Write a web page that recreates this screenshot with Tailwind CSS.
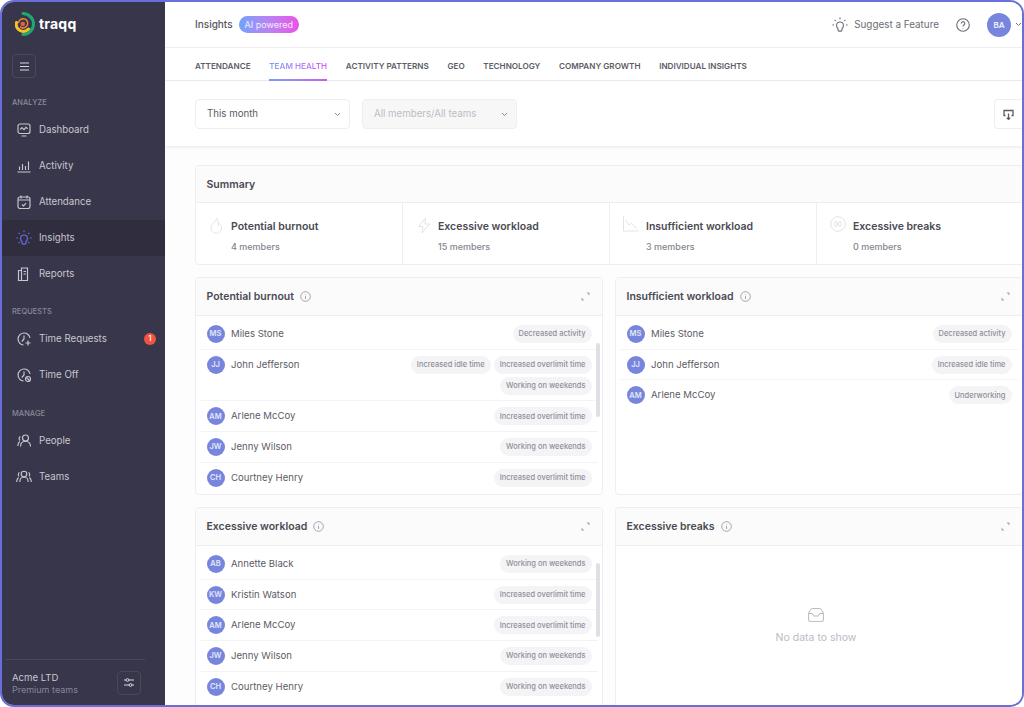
<!DOCTYPE html>
<html lang="en">
<head>
    <meta charset="UTF-8">
    <title>traqq - Insights</title>
    <script src="https://cdn.jsdelivr.net/npm/@tailwindcss/browser@4"></script>
</head>
<body class="bg-white [font-family:Inter,sans-serif]">
<div class="w-[1024px] h-[707px] border-2 border-[#6a6ed8] rounded-[14px] overflow-hidden flex bg-[#fdfdfd]">

    <!-- sidebar -->
    <aside class="w-[163px] shrink-0 h-full bg-[#38364a] flex flex-col text-[#c8c7d1]">
        <div class="flex items-center h-[44px] pl-[13px]">
            <svg width="20" height="24" viewBox="0 0 20 24" fill="none">
                <path d="M8 1.5a10.5 10.5 0 0 1 0 21" stroke="#1fa971" stroke-width="3" stroke-linecap="round"/>
                <path d="M1.5 10.5a7 7 0 0 0 12 6.5" stroke="#f6c12c" stroke-width="3" stroke-linecap="round"/>
                <path d="M3.6 10.5a4.6 4.6 0 1 1 2 4.6" stroke="#f08a2c" stroke-width="1.5" stroke-linecap="round"/>
                <circle cx="7.8" cy="12" r="2.3" fill="#ee5a4a"/>
            </svg>
            <span class="ml-[4px] text-[14px] leading-none font-bold text-white tracking-[0.2px]">traqq</span>
        </div>
        <div class="mt-[8px] ml-[10px] w-[24px] h-[24px] rounded-[4px] border border-[#4a4859] flex items-center justify-center">
            <svg width="11" height="9" viewBox="0 0 11 9" fill="none" stroke="#d8d7df" stroke-width="1.1"><path d="M1 1h9M1 4.5h9M1 8h9"/></svg>
        </div>
        <div class="mt-[20px] ml-[10px] text-[7.5px] leading-[10px] font-medium text-[#8a8899]">ANALYZE</div>
        <nav class="mt-[4px] flex flex-col text-[9.7px]">
            <a class="h-[36px] flex items-center pl-[15px] gap-[8px]">
                <svg class="w-[14px] h-[14px]" viewBox="0 0 14 14" fill="none" stroke="#c8c7d1" stroke-width="1.15"><rect x="1" y="1" width="12" height="9.5" rx="2"/><path d="M3.2 6.5 5 4.6l2 2 2-2.2 1.6 1.4M4.5 13h5"/></svg>
                <span>Dashboard</span>
            </a>
            <a class="h-[36px] flex items-center pl-[15px] gap-[8px]">
                <svg class="w-[14px] h-[14px]" viewBox="0 0 14 14" fill="none" stroke="#c8c7d1" stroke-width="1.15"><path d="M.5 13h13M2.5 11V7.5M5.5 11V5M8.5 11V7M11.5 11V2.5"/></svg>
                <span>Activity</span>
            </a>
            <a class="h-[36px] flex items-center pl-[15px] gap-[8px]">
                <svg class="w-[14px] h-[14px]" viewBox="0 0 14 14" fill="none" stroke="#c8c7d1" stroke-width="1.15"><rect x="1" y="2" width="12" height="11.5" rx="2"/><path d="M1 5h12M4 .5v3M10 .5v3M5 9.5l1.5 1.4L9 8.2"/></svg>
                <span>Attendance</span>
            </a>
            <a class="h-[36px] flex items-center pl-[14px] gap-[7px] bg-[#2f2d3e]">
                <svg class="w-[16px] h-[16px]" viewBox="0 0 16 16" fill="none" stroke="#6b6ee0" stroke-width="1.2"><path d="M6 11.5C5 10.6 4.6 9.6 4.6 8.4a3.4 3.4 0 0 1 6.8 0c0 1.2-.4 2.2-1.4 3.1v1.6a1 1 0 0 1-1 1H7a1 1 0 0 1-1-1z"/><path d="M8 .6v1.6M2.6 2.8l1.1 1.1M13.4 2.8l-1.1 1.1M.4 8H2M14 8h1.6M2.6 13l1.1-1.1M13.4 13l-1.1-1.1"/></svg>
                <span>Insights</span>
            </a>
            <a class="h-[36px] flex items-center pl-[15px] gap-[8px]">
                <svg class="w-[14px] h-[14px]" viewBox="0 0 14 14" fill="none" stroke="#c8c7d1" stroke-width="1.15"><path d="M4.5 3.5h-3v10h9V1h-6zM4.5 1v12.5M6.5 4.5H9M6.5 7H9"/></svg>
                <span>Reports</span>
            </a>
        </nav>
        <div class="mt-[15px] ml-[10px] text-[7.5px] leading-[10px] font-medium text-[#8a8899]">REQUESTS</div>
        <nav class="mt-[4px] flex flex-col text-[9.7px]">
            <a class="h-[36px] flex items-center pl-[15px] gap-[8px] pr-[9px]">
                <svg class="w-[14px] h-[14px]" viewBox="0 0 14 14" fill="none" stroke="#c8c7d1" stroke-width="1.15"><path d="M13 6a6 6 0 1 0-6.5 7M7 3.5V7L4.8 9.5M11 8.5v5M8.5 11h5"/></svg>
                <span>Time Requests</span>
                <span class="ml-auto w-[12px] h-[12px] rounded-full bg-[#f2533f] text-white text-[7px] font-semibold flex items-center justify-center">1</span>
            </a>
            <a class="h-[36px] flex items-center pl-[15px] gap-[8px]">
                <svg class="w-[14px] h-[14px]" viewBox="0 0 14 14" fill="none" stroke="#c8c7d1" stroke-width="1.15"><path d="M13 6a6 6 0 1 0-6.5 7M7 3.5V7L4.8 9.5"/><circle cx="11" cy="11" r="2.5"/><path d="m9.5 9.5 3 3"/></svg>
                <span>Time Off</span>
            </a>
        </nav>
        <div class="mt-[16px] ml-[10px] text-[7.5px] leading-[10px] font-medium text-[#8a8899]">MANAGE</div>
        <nav class="mt-[4px] flex flex-col text-[9.7px]">
            <a class="h-[36px] flex items-center pl-[15px] gap-[8px]">
                <svg class="w-[14px] h-[14px]" viewBox="0 0 14 14" fill="none" stroke="#c8c7d1" stroke-width="1.15"><circle cx="8.5" cy="4" r="3"/><path d="M3.5 12.5c0-3 2-5.3 5-5.3s5 2.3 5 5.3M3.5 2.5C2 3 1.5 5 3 6.5M2.8 7.500C1.500 8.500.8 10 .8 12"/></svg>
                <span>People</span>
            </a>
            <a class="h-[36px] flex items-center pl-[14px] gap-[7px]">
                <svg class="w-[16px] h-[14px]" viewBox="0 0 16 14" fill="none" stroke="#c8c7d1" stroke-width="1.15"><circle cx="8" cy="4" r="2.8"/><path d="M3.8 12c0-2.8 1.8-5 4.2-5s4.2 2.200 4.200 5M3.500 2.500C2.200 3 1.800 5 3 6.300M2.600 7.500C1.300 8.500.6 10 .6 12M12.500 2.500c1.300.5 1.700 2.500.5 3.800M13.400 7.500c1.300 1 2 2.500 2 4.500"/></svg>
                <span>Teams</span>
            </a>
        </nav>
        <div class="mt-auto ml-[4px] mr-[20px] h-[46px] border-t border-[#4a4859] flex items-center pl-[6px]">
            <div class="pt-[1px]">
                <div class="text-[9.6px] leading-[13px]">Acme LTD</div>
                <div class="text-[9px] leading-[12px] text-[#86849a]">Premium teams</div>
            </div>
            <div class="ml-auto mr-[4px] w-[24px] h-[24px] rounded-[4px] border border-[#4a4859] flex items-center justify-center">
                <svg width="12" height="11" viewBox="0 0 12 11" fill="none" stroke="#d8d7df" stroke-width="1"><path d="M1 3h2M6 3h5M1 8h5M9 8h2"/><circle cx="4.5" cy="3" r="1.4"/><circle cx="7.5" cy="8" r="1.4"/></svg>
            </div>
        </div>
    </aside>

    <!-- main -->
    <main class="flex-1 min-w-0 h-full flex flex-col overflow-hidden">
        <header class="h-[46px] shrink-0 bg-white border-b border-[#eeeef1] flex items-center pl-[30px]">
            <span class="text-[10px] font-medium text-[#55555e]">Insights</span>
            <span class="ml-[6px] h-[17px] px-[6px] rounded-full bg-gradient-to-r from-[#6ea2fb] to-[#ea4fe8] text-white/85 text-[9px] flex items-center">AI powered</span>
            <svg class="ml-auto" width="16" height="16" viewBox="0 0 16 16" fill="none" stroke="#6b6b74" stroke-width="1.1"><path d="M6 11.5C5 10.6 4.6 9.6 4.6 8.4a3.4 3.4 0 0 1 6.8 0c0 1.2-.4 2.2-1.4 3.1v1.6a1 1 0 0 1-1 1H7a1 1 0 0 1-1-1z"/><path d="M8 .6v1.6M2.6 2.8l1.1 1.1M13.4 2.8l-1.1 1.1M.4 8H2M14 8h1.6"/></svg>
            <span class="ml-[6px] text-[9.9px] text-[#6b6b74]">Suggest a Feature</span>
            <svg class="ml-[17px]" width="14" height="14" viewBox="0 0 14 14" fill="none" stroke="#6b6b74" stroke-width="1.1"><circle cx="7" cy="7" r="6.3"/><path d="M5.2 5.5a1.800 1.800 0 1 1 2.600 1.600c-.6.300-.8.700-.8 1.300M7 10.200v.5"/></svg>
            <span class="ml-[17px] w-[24px] h-[24px] rounded-full bg-[#7786dc] text-white/90 text-[8px] font-semibold flex items-center justify-center">BA</span>
            <svg class="ml-[3.5px] mr-[0.5px]" width="7" height="5" viewBox="0 0 7 5" fill="none" stroke="#77777f" stroke-width="1"><path d="m1 1 2.5 2.5L6 1"/></svg>
        </header>

        <div class="h-[33px] shrink-0 bg-white border-b border-[#eeeef1] flex pl-[30px] pt-[4px] gap-[18.7px] text-[8.15px] font-semibold text-[#5c5c65]">
            <span class="flex items-center">ATTENDANCE</span>
            <span class="flex items-center relative">
                <span class="bg-gradient-to-r from-[#6ea2fb] to-[#d65cf0] bg-clip-text text-transparent">TEAM HEALTH</span>
                <span class="absolute left-0 right-0 bottom-[-1px] h-[2px] bg-gradient-to-r from-[#6ea2fb] to-[#c95cf0]"></span>
            </span>
            <span class="flex items-center">ACTIVITY PATTERNS</span>
            <span class="flex items-center">GEO</span>
            <span class="flex items-center">TECHNOLOGY</span>
            <span class="flex items-center">COMPANY GROWTH</span>
            <span class="flex items-center">INDIVIDUAL INSIGHTS</span>
        </div>

        <div class="h-[65px] shrink-0 bg-white flex items-start pt-[18px] pl-[30px] gap-[12px] shadow-[0_1px_3px_rgba(40,40,60,0.10)] relative text-[9.7px]">
            <div class="w-[155px] h-[30px] rounded-[4px] border border-[#eeeef2] bg-white flex items-center pt-[1px] pl-[11px] pr-[8px] text-[#5c5c65]">
                <span>This month</span>
                <svg class="ml-auto" width="7" height="5" viewBox="0 0 7 5" fill="none" stroke="#8c8c94" stroke-width="1"><path d="m1 1 2.5 2.5L6 1"/></svg>
            </div>
            <div class="w-[155px] h-[30px] rounded-[4px] border border-[#eeeef2] bg-[#f7f7f8] flex items-center pt-[1px] pl-[11px] pr-[8px] text-[#bcbcc4]">
                <span>All members/All teams</span>
                <svg class="ml-auto" width="7" height="5" viewBox="0 0 7 5" fill="none" stroke="#8c8c94" stroke-width="1"><path d="m1 1 2.5 2.5L6 1"/></svg>
            </div>
            <div class="ml-auto w-[28px] h-[30px] rounded-l-[4px] border border-r-0 border-[#eeeef2] bg-white flex items-center justify-center">
                <svg width="11" height="11" viewBox="0 0 11 11" fill="none" stroke="#5c5c65" stroke-width="1.3"><path d="M2.5 6.5H1v-5h9v5H8.5M5.5 4.5v6M3.8 8.700l1.700 1.700 1.700-1.700"/></svg>
            </div>
        </div>

        <div class="flex-1 min-h-0 pt-[19px] pl-[30px] overflow-hidden">
            <!-- summary -->
            <section class="w-[860px] h-[100px] rounded-[4px] border border-[#eeeef1] bg-white overflow-hidden">
                <div class="h-[37px] bg-[#fbfbfc] border-b border-[#eeeef1] flex items-center pt-[1px] pl-[10.5px] text-[10.5px] font-semibold text-[#4a4a52]">Summary</div>
                <div class="flex h-[61px]">
                    <div class="w-[207px] shrink-0 border-r border-[#eeeef1] flex pl-[13px] pt-[17px]">
                        <svg class="w-[14px] h-[17px] mt-[-3px]" viewBox="0 0 14 17" fill="none" stroke="#e2e3ea" stroke-width="1"><path d="M7.5 1c.5 3-5.500 5.500-5.500 10a5.300 5.300 0 0 0 10.600 0c0-2-1-3.500-2-4.500-.2 1-.8 1.500-1.400 1.800C9.500 5.500 9 3 7.500 1z"/></svg>
                        <div class="ml-[8px]">
                            <div class="text-[10.5px] leading-[13px] font-semibold text-[#4a4a52]">Potential burnout</div>
                            <div class="mt-[7.5px] text-[9px] leading-[12px] font-medium text-[#85858e]">4 members</div>
                        </div>
                    </div>
                    <div class="w-[207px] shrink-0 border-r border-[#eeeef1] flex pl-[14px] pt-[17px]">
                        <svg class="w-[14px] h-[17px] mt-[-3px]" viewBox="0 0 14 17" fill="none" stroke="#e2e3ea" stroke-width="1"><path d="M8.5 1 1.5 9.5H6L5 16l7.5-9H8z"/></svg>
                        <div class="ml-[7px]">
                            <div class="text-[10.5px] leading-[13px] font-semibold text-[#4a4a52]">Excessive workload</div>
                            <div class="mt-[7.5px] text-[9px] leading-[12px] font-medium text-[#85858e]">15 members</div>
                        </div>
                    </div>
                    <div class="w-[207px] shrink-0 border-r border-[#eeeef1] flex pl-[13px] pt-[17px]">
                        <svg class="w-[16px] h-[16px] mt-[-4px]" viewBox="0 0 16 16" fill="none" stroke="#e2e3ea" stroke-width="1"><path d="M.5.5V15h15M2.500 4 6 9l2.500-2 3.500 4 2 1"/></svg>
                        <div class="ml-[7px]">
                            <div class="text-[10.5px] leading-[13px] font-semibold text-[#4a4a52]">Insufficient workload</div>
                            <div class="mt-[7.5px] text-[9px] leading-[12px] font-medium text-[#85858e]">3 members</div>
                        </div>
                    </div>
                    <div class="w-[207px] shrink-0 flex pl-[13px] pt-[17px]">
                        <svg class="w-[16px] h-[16px] mt-[-4px]" viewBox="0 0 16 16" fill="none" stroke="#e2e3ea" stroke-width="1"><circle cx="8" cy="8" r="7.3"/><rect x="5" y="5.5" width="2.2" height="5" rx="1"/><rect x="8.8" y="5.5" width="2.2" height="5" rx="1"/></svg>
                        <div class="ml-[7px]">
                            <div class="text-[10.5px] leading-[13px] font-semibold text-[#4a4a52]">Excessive breaks</div>
                            <div class="mt-[7.5px] text-[9px] leading-[12px] font-medium text-[#85858e]">0 members</div>
                        </div>
                    </div>
                </div>
            </section>

            <!-- panels -->
            <div class="mt-[12px] grid grid-cols-[408px_408px] gap-x-[12px] gap-y-[12px]">

                <section class="relative h-[218px] rounded-[4px] border border-[#eeeef1] bg-white overflow-hidden">
                    <div class="h-[38px] bg-[#fbfbfc] border-b border-[#eeeef1] flex items-center pl-[10.5px] pr-[12px]">
                        <span class="text-[10.5px] font-semibold text-[#4a4a52]">Potential burnout</span>
                        <svg class="ml-[6px]" width="11" height="11" viewBox="0 0 11 11" fill="none" stroke="#9b9ba3" stroke-width="0.9"><circle cx="5.5" cy="5.5" r="4.8"/><path d="M5.5 5v3M5.5 3v.6"/></svg>
                        <svg class="ml-auto" width="9" height="9" viewBox="0 0 9 9" fill="#a9a9b0"><path d="M5.5.5h3v3zM.5 5.5v3h3z"/></svg>
                    </div>
                    <div class="mx-[4.5px] pt-[3px] text-[9.6px] text-[#5c5c65]">
                        <div class="flex items-start pt-[6px] pb-[5.7px] px-[6px] border-b border-[#f3f3f5]">
                            <span class="w-[18px] h-[18px] shrink-0 rounded-full bg-[#7786dc] text-white/80 text-[7.5px] font-semibold flex items-center justify-center">MS</span>
                            <span class="ml-[6.5px] leading-[18px] whitespace-nowrap">Miles Stone</span>
                            <div class="ml-auto flex flex-wrap justify-end gap-[3px] w-[200px]"><span class="h-[18px] px-[6px] rounded-full bg-[#f4f4f6] text-[#8f8f98] text-[7.5px] font-medium flex items-center">Decreased activity</span></div>
                        </div>
                        <div class="flex items-start pt-[6px] pb-[5.7px] px-[6px] border-b border-[#f3f3f5]">
                            <span class="w-[18px] h-[18px] shrink-0 rounded-full bg-[#7786dc] text-white/80 text-[7.5px] font-semibold flex items-center justify-center">JJ</span>
                            <span class="ml-[6.5px] leading-[18px] whitespace-nowrap">John Jefferson</span>
                            <div class="ml-auto flex flex-wrap justify-end gap-[3px] w-[200px]">
                                <span class="h-[18px] px-[6px] rounded-full bg-[#f4f4f6] text-[#8f8f98] text-[7.5px] font-medium flex items-center">Increased idle time</span>
                                <span class="h-[18px] px-[6px] rounded-full bg-[#f4f4f6] text-[#8f8f98] text-[7.5px] font-medium flex items-center">Increased overlimit time</span>
                                <span class="h-[18px] px-[6px] rounded-full bg-[#f4f4f6] text-[#8f8f98] text-[7.5px] font-medium flex items-center">Working on weekends</span>
                            </div>
                        </div>
                        <div class="flex items-start pt-[6px] pb-[5.7px] px-[6px] border-b border-[#f3f3f5]">
                            <span class="w-[18px] h-[18px] shrink-0 rounded-full bg-[#7786dc] text-white/80 text-[7.5px] font-semibold flex items-center justify-center">AM</span>
                            <span class="ml-[6.5px] leading-[18px] whitespace-nowrap">Arlene McCoy</span>
                            <div class="ml-auto flex flex-wrap justify-end gap-[3px] w-[200px]"><span class="h-[18px] px-[6px] rounded-full bg-[#f4f4f6] text-[#8f8f98] text-[7.5px] font-medium flex items-center">Increased overlimit time</span></div>
                        </div>
                        <div class="flex items-start pt-[6px] pb-[5.7px] px-[6px] border-b border-[#f3f3f5]">
                            <span class="w-[18px] h-[18px] shrink-0 rounded-full bg-[#7786dc] text-white/80 text-[7.5px] font-semibold flex items-center justify-center">JW</span>
                            <span class="ml-[6.5px] leading-[18px] whitespace-nowrap">Jenny Wilson</span>
                            <div class="ml-auto flex flex-wrap justify-end gap-[3px] w-[200px]"><span class="h-[18px] px-[6px] rounded-full bg-[#f4f4f6] text-[#8f8f98] text-[7.5px] font-medium flex items-center">Working on weekends</span></div>
                        </div>
                        <div class="flex items-start pt-[6px] pb-[5.7px] px-[6px]">
                            <span class="w-[18px] h-[18px] shrink-0 rounded-full bg-[#7786dc] text-white/80 text-[7.5px] font-semibold flex items-center justify-center">CH</span>
                            <span class="ml-[6.5px] leading-[18px] whitespace-nowrap">Courtney Henry</span>
                            <div class="ml-auto flex flex-wrap justify-end gap-[3px] w-[200px]"><span class="h-[18px] px-[6px] rounded-full bg-[#f4f4f6] text-[#8f8f98] text-[7.5px] font-medium flex items-center">Increased overlimit time</span></div>
                        </div>
                    </div>
                    <div class="absolute right-[2.5px] top-[65px] w-[3.6px] h-[74px] rounded-full bg-[#dfe0e6]"></div>
                </section>

                <section class="relative h-[218px] rounded-[4px] border border-[#eeeef1] bg-white overflow-hidden">
                    <div class="h-[38px] bg-[#fbfbfc] border-b border-[#eeeef1] flex items-center pl-[10.5px] pr-[12px]">
                        <span class="text-[10.5px] font-semibold text-[#4a4a52]">Insufficient workload</span>
                        <svg class="ml-[6px]" width="11" height="11" viewBox="0 0 11 11" fill="none" stroke="#9b9ba3" stroke-width="0.9"><circle cx="5.5" cy="5.5" r="4.8"/><path d="M5.5 5v3M5.5 3v.6"/></svg>
                        <svg class="ml-auto" width="9" height="9" viewBox="0 0 9 9" fill="#a9a9b0"><path d="M5.5.5h3v3zM.5 5.5v3h3z"/></svg>
                    </div>
                    <div class="mx-[4.5px] pt-[3px] text-[9.6px] text-[#5c5c65]">
                        <div class="flex items-start pt-[6px] pb-[5.7px] px-[6px] border-b border-[#f3f3f5]">
                            <span class="w-[18px] h-[18px] shrink-0 rounded-full bg-[#7786dc] text-white/80 text-[7.5px] font-semibold flex items-center justify-center">MS</span>
                            <span class="ml-[6.5px] leading-[18px] whitespace-nowrap">Miles Stone</span>
                            <span class="ml-auto h-[18px] px-[6px] rounded-full bg-[#f4f4f6] text-[#8f8f98] text-[7.5px] font-medium flex items-center">Decreased activity</span>
                        </div>
                        <div class="flex items-start pt-[6px] pb-[5.7px] px-[6px] border-b border-[#f3f3f5]">
                            <span class="w-[18px] h-[18px] shrink-0 rounded-full bg-[#7786dc] text-white/80 text-[7.5px] font-semibold flex items-center justify-center">JJ</span>
                            <span class="ml-[6.5px] leading-[18px] whitespace-nowrap">John Jefferson</span>
                            <span class="ml-auto h-[18px] px-[6px] rounded-full bg-[#f4f4f6] text-[#8f8f98] text-[7.5px] font-medium flex items-center">Increased idle time</span>
                        </div>
                        <div class="flex items-start pt-[6px] pb-[5.7px] px-[6px]">
                            <span class="w-[18px] h-[18px] shrink-0 rounded-full bg-[#7786dc] text-white/80 text-[7.5px] font-semibold flex items-center justify-center">AM</span>
                            <span class="ml-[6.5px] leading-[18px] whitespace-nowrap">Arlene McCoy</span>
                            <span class="ml-auto h-[18px] px-[6px] rounded-full bg-[#f4f4f6] text-[#8f8f98] text-[7.5px] font-medium flex items-center">Underworking</span>
                        </div>
                    </div>
                </section>

                <section class="relative h-[218px] rounded-[4px] border border-[#eeeef1] bg-white overflow-hidden">
                    <div class="h-[38px] bg-[#fbfbfc] border-b border-[#eeeef1] flex items-center pl-[10.5px] pr-[12px]">
                        <span class="text-[10.5px] font-semibold text-[#4a4a52]">Excessive workload</span>
                        <svg class="ml-[6px]" width="11" height="11" viewBox="0 0 11 11" fill="none" stroke="#9b9ba3" stroke-width="0.9"><circle cx="5.5" cy="5.5" r="4.8"/><path d="M5.5 5v3M5.5 3v.6"/></svg>
                        <svg class="ml-auto" width="9" height="9" viewBox="0 0 9 9" fill="#a9a9b0"><path d="M5.5.5h3v3zM.5 5.5v3h3z"/></svg>
                    </div>
                    <div class="mx-[4.5px] pt-[3px] text-[9.6px] text-[#5c5c65]">
                        <div class="flex items-start pt-[6px] pb-[5.7px] px-[6px] border-b border-[#f3f3f5]">
                            <span class="w-[18px] h-[18px] shrink-0 rounded-full bg-[#7786dc] text-white/80 text-[7.5px] font-semibold flex items-center justify-center">AB</span>
                            <span class="ml-[6.5px] leading-[18px] whitespace-nowrap">Annette Black</span>
                            <span class="ml-auto h-[18px] px-[6px] rounded-full bg-[#f4f4f6] text-[#8f8f98] text-[7.5px] font-medium flex items-center">Working on weekends</span>
                        </div>
                        <div class="flex items-start pt-[6px] pb-[5.7px] px-[6px] border-b border-[#f3f3f5]">
                            <span class="w-[18px] h-[18px] shrink-0 rounded-full bg-[#7786dc] text-white/80 text-[7.5px] font-semibold flex items-center justify-center">KW</span>
                            <span class="ml-[6.5px] leading-[18px] whitespace-nowrap">Kristin Watson</span>
                            <span class="ml-auto h-[18px] px-[6px] rounded-full bg-[#f4f4f6] text-[#8f8f98] text-[7.5px] font-medium flex items-center">Increased overlimit time</span>
                        </div>
                        <div class="flex items-start pt-[6px] pb-[5.7px] px-[6px] border-b border-[#f3f3f5]">
                            <span class="w-[18px] h-[18px] shrink-0 rounded-full bg-[#7786dc] text-white/80 text-[7.5px] font-semibold flex items-center justify-center">AM</span>
                            <span class="ml-[6.5px] leading-[18px] whitespace-nowrap">Arlene McCoy</span>
                            <span class="ml-auto h-[18px] px-[6px] rounded-full bg-[#f4f4f6] text-[#8f8f98] text-[7.5px] font-medium flex items-center">Increased overlimit time</span>
                        </div>
                        <div class="flex items-start pt-[6px] pb-[5.7px] px-[6px] border-b border-[#f3f3f5]">
                            <span class="w-[18px] h-[18px] shrink-0 rounded-full bg-[#7786dc] text-white/80 text-[7.5px] font-semibold flex items-center justify-center">JW</span>
                            <span class="ml-[6.5px] leading-[18px] whitespace-nowrap">Jenny Wilson</span>
                            <span class="ml-auto h-[18px] px-[6px] rounded-full bg-[#f4f4f6] text-[#8f8f98] text-[7.5px] font-medium flex items-center">Working on weekends</span>
                        </div>
                        <div class="flex items-start pt-[6px] pb-[5.7px] px-[6px]">
                            <span class="w-[18px] h-[18px] shrink-0 rounded-full bg-[#7786dc] text-white/80 text-[7.5px] font-semibold flex items-center justify-center">CH</span>
                            <span class="ml-[6.5px] leading-[18px] whitespace-nowrap">Courtney Henry</span>
                            <span class="ml-auto h-[18px] px-[6px] rounded-full bg-[#f4f4f6] text-[#8f8f98] text-[7.5px] font-medium flex items-center">Working on weekends</span>
                        </div>
                    </div>
                    <div class="absolute right-[2.5px] top-[55px] w-[3.6px] h-[74px] rounded-full bg-[#dfe0e6]"></div>
                </section>

                <section class="relative h-[218px] rounded-[4px] border border-[#eeeef1] bg-white overflow-hidden">
                    <div class="h-[38px] bg-[#fbfbfc] border-b border-[#eeeef1] flex items-center pl-[10.5px] pr-[12px]">
                        <span class="text-[10.5px] font-semibold text-[#4a4a52]">Excessive breaks</span>
                        <svg class="ml-[6px]" width="11" height="11" viewBox="0 0 11 11" fill="none" stroke="#9b9ba3" stroke-width="0.9"><circle cx="5.5" cy="5.5" r="4.8"/><path d="M5.5 5v3M5.5 3v.6"/></svg>
                        <svg class="ml-auto" width="9" height="9" viewBox="0 0 9 9" fill="#a9a9b0"><path d="M5.5.5h3v3zM.5 5.5v3h3z"/></svg>
                    </div>
                    <div class="flex flex-col items-center pt-[62px] pr-[6px]">
                        <svg width="16" height="14" viewBox="0 0 16 14" fill="none" stroke="#b9b9c1" stroke-width="1"><path d="M3.5.6h9L15.4 5v7a1.4 1.4 0 0 1-1.4 1.4H2A1.4 1.4 0 0 1 .6 12V5zM.6 5.5h3.6L5.600 8h4.800l1.400-2.500h3.600"/></svg>
                        <span class="mt-[8px] text-[10.5px] text-[#bcbcc4]">No data to show</span>
                    </div>
                </section>
            </div>
        </div>
    </main>
</div>
</body>
</html>
